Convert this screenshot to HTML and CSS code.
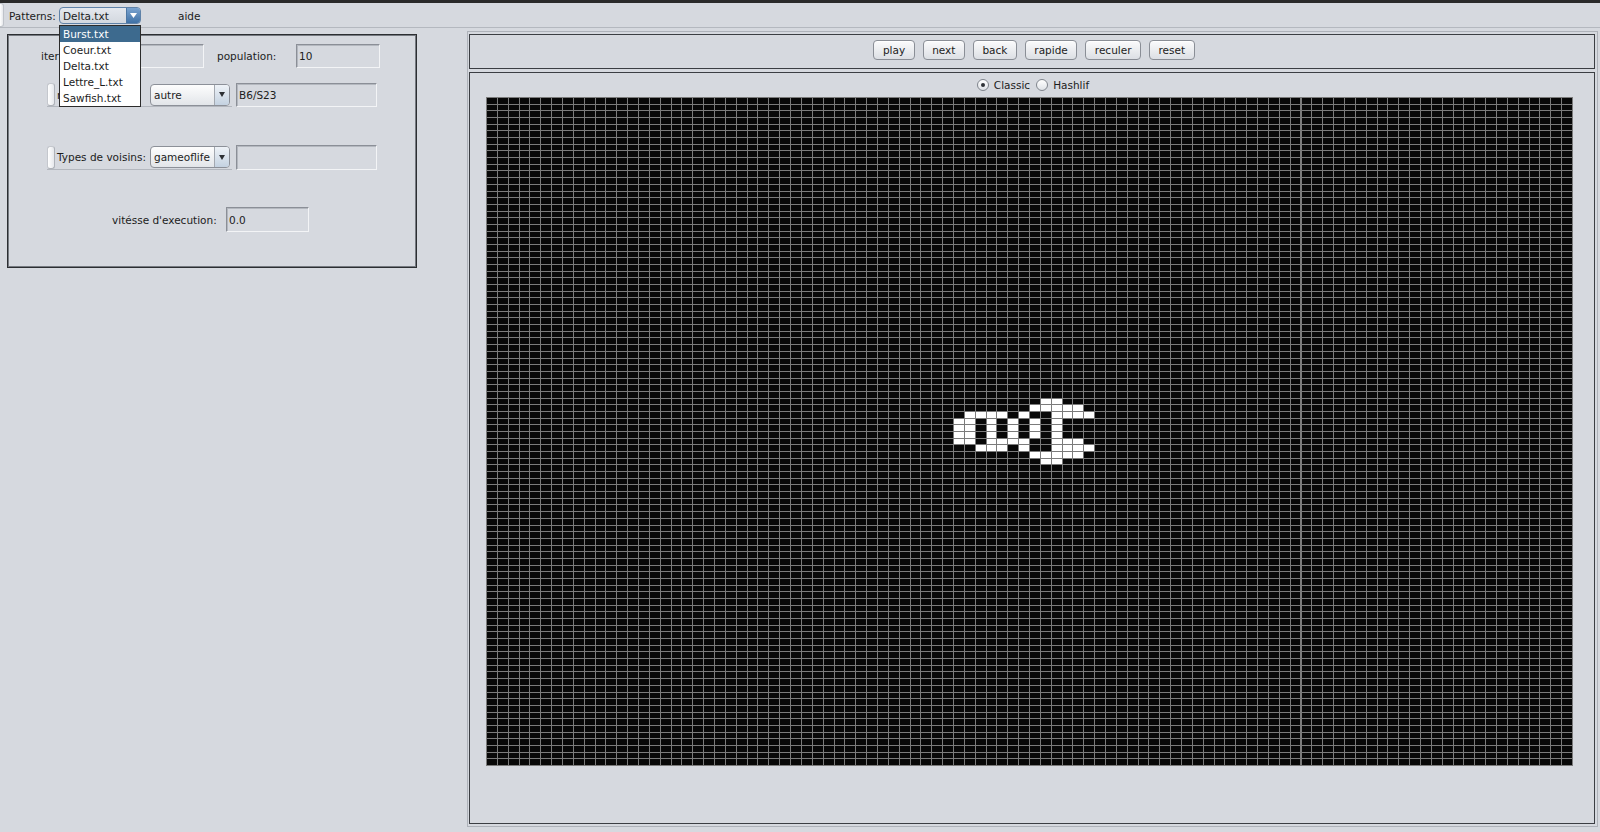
FILE: index.html
```html
<!DOCTYPE html>
<html lang="fr">
<head>
<meta charset="utf-8">
<title>Jeu de la vie</title>
<link rel="stylesheet" href="styles.css">
</head>
<body>
<div class="topstrip"></div>
<div class="menubar">
  <div class="grip grip-menu"></div>
  <span class="menu-label">Patterns:</span>
  <div class="combo combo-focus">
    <span class="combo-text">Delta.txt</span>
    <span class="combo-arrow"><svg width="7" height="5" viewBox="0 0 7 5"><path d="M0 0H7L3.5 5Z" fill="#fff"/></svg></span>
    <ul class="popup">
      <li class="sel">Burst.txt</li>
      <li>Coeur.txt</li>
      <li>Delta.txt</li>
      <li>Lettre_L.txt</li>
      <li>Sawfish.txt</li>
    </ul>
  </div>
  <span class="menu-item">aide</span>
</div>
<div class="main">
  <div class="leftcol">
    <div class="params">
      <div class="row r1">
        <span class="lbl l-iter">iterations:</span>
        <div class="field f-iter"></div>
        <span class="lbl l-pop">population:</span>
        <div class="field f-pop">10</div>
      </div>
      <div class="row r2">
        <div class="tb">
          <div class="grip grip-tb"></div>
          <span class="lbl tb-lbl">règles:</span>
          <div class="combo combo-plain">
            <span class="combo-text">autre</span>
            <span class="combo-arrow"><svg width="6" height="5" viewBox="0 0 6 5"><path d="M0 0H6L3 5Z" fill="#2d3035"/></svg></span>
          </div>
        </div>
        <div class="field f-wide">B6/S23</div>
      </div>
      <div class="row r3">
        <div class="tb">
          <div class="grip grip-tb"></div>
          <span class="lbl tb-lbl">Types de voisins:</span>
          <div class="combo combo-plain">
            <span class="combo-text">gameoflife</span>
            <span class="combo-arrow"><svg width="6" height="5" viewBox="0 0 6 5"><path d="M0 0H6L3 5Z" fill="#2d3035"/></svg></span>
          </div>
        </div>
        <div class="field f-wide"></div>
      </div>
      <div class="row r4">
        <span class="lbl l-speed">vitésse d'execution:</span>
        <div class="field f-speed">0.0</div>
      </div>
    </div>
  </div>
  <div class="rightcol">
    <div class="toolbar-panel">
      <button class="btn">play</button>
      <button class="btn">next</button>
      <button class="btn">back</button>
      <button class="btn">rapide</button>
      <button class="btn">reculer</button>
      <button class="btn">reset</button>
    </div>
    <div class="canvas-panel">
      <div class="radio-row">
        <span class="radio checked"></span><span class="radio-lbl">Classic</span>
        <span class="radio"></span><span class="radio-lbl">Hashlif</span>
      </div>
      <div class="grid-wrap">
        <div class="grid">
          <svg class="cells" width="1086" height="668" viewBox="0 0 100 100" preserveAspectRatio="none" shape-rendering="crispEdges">
            <defs><rect id="c" width="0.908" height="0.85" fill="#ffffff"/></defs>
            <g transform="translate(0.092 0.15)">
              <use href="#c" x="51" y="45"/><use href="#c" x="52" y="45"/>
              <use href="#c" x="50" y="46"/><use href="#c" x="51" y="46"/><use href="#c" x="52" y="46"/><use href="#c" x="53" y="46"/><use href="#c" x="54" y="46"/>
              <use href="#c" x="44" y="47"/><use href="#c" x="45" y="47"/><use href="#c" x="46" y="47"/><use href="#c" x="47" y="47"/><use href="#c" x="49" y="47"/><use href="#c" x="52" y="47"/><use href="#c" x="53" y="47"/><use href="#c" x="54" y="47"/><use href="#c" x="55" y="47"/>
              <use href="#c" x="43" y="48"/><use href="#c" x="44" y="48"/><use href="#c" x="46" y="48"/><use href="#c" x="48" y="48"/><use href="#c" x="50" y="48"/><use href="#c" x="52" y="48"/>
              <use href="#c" x="43" y="49"/><use href="#c" x="44" y="49"/><use href="#c" x="46" y="49"/><use href="#c" x="48" y="49"/><use href="#c" x="50" y="49"/><use href="#c" x="52" y="49"/>
              <use href="#c" x="43" y="50"/><use href="#c" x="44" y="50"/><use href="#c" x="46" y="50"/><use href="#c" x="48" y="50"/><use href="#c" x="50" y="50"/><use href="#c" x="52" y="50"/>
              <use href="#c" x="43" y="51"/><use href="#c" x="44" y="51"/><use href="#c" x="46" y="51"/><use href="#c" x="47" y="51"/><use href="#c" x="48" y="51"/><use href="#c" x="49" y="51"/><use href="#c" x="52" y="51"/><use href="#c" x="53" y="51"/><use href="#c" x="54" y="51"/>
              <use href="#c" x="45" y="52"/><use href="#c" x="46" y="52"/><use href="#c" x="47" y="52"/><use href="#c" x="49" y="52"/><use href="#c" x="52" y="52"/><use href="#c" x="53" y="52"/><use href="#c" x="54" y="52"/><use href="#c" x="55" y="52"/>
              <use href="#c" x="50" y="53"/><use href="#c" x="51" y="53"/><use href="#c" x="52" y="53"/><use href="#c" x="53" y="53"/><use href="#c" x="54" y="53"/>
              <use href="#c" x="51" y="54"/><use href="#c" x="52" y="54"/>
            </g>
          </svg>
        </div>
      </div>
    </div>
  </div>
</div>
</body>
</html>
```
FILE: styles.css
```css
* { box-sizing: border-box; }
html, body { margin: 0; padding: 0; }
body {
  width: 1600px;
  height: 832px;
  overflow: hidden;
  background: #d6d9df;
  font-family: "DejaVu Sans", "Liberation Sans", sans-serif;
  font-size: 10.5px;
  color: #1c1c1c;
}

.topstrip { height: 3px; background: #2a2a2a; }

/* ---------- menu bar ---------- */
.menubar {
  position: relative;
  z-index: 10;
  display: flex;
  align-items: center;
  height: 25px;
  padding-top: 1px;
  border-bottom: 1px solid #b4b8bf;
}
.grip {
  background: linear-gradient(to right, #ffffff, #e6e8ec);
  border: 1px solid #bfc3ca;
}
.grip-menu {
  align-self: stretch;
  width: 4px;
  margin-top: -1px;
  border-left: none;
  border-radius: 0 3px 3px 0;
}
.menu-label { margin-left: 5px; width: 50px; }
.menu-item { margin-left: 37px; }

/* ---------- combos ---------- */
.combo {
  position: relative;
  display: flex;
  align-items: stretch;
  border-radius: 4px;
  flex: none;
}
.combo-text {
  flex: 1;
  display: flex;
  align-items: center;
  padding-left: 3px;
  white-space: nowrap;
}
.combo-arrow {
  display: flex;
  align-items: center;
  justify-content: center;
  border-radius: 0 3px 3px 0;
}
.combo-focus {
  width: 82px;
  height: 17px;
  border: 1px solid #5f82a8;
  background: linear-gradient(#e4e8ee, #d3d8df);
}
.combo-focus .combo-arrow {
  width: 14px;
  background: linear-gradient(#7aa3cf, #3f71a6);
  border-left: 1px solid #4d77a3;
}
.combo-plain {
  width: 80px;
  height: 22px;
  border: 1px solid #8c9098;
  background: linear-gradient(#fdfdfd, #e2e5e9);
}
.combo-plain .combo-text { padding-left: 3px; }
.combo-plain .combo-arrow {
  width: 15px;
  border-left: 1px solid #a3a8b0;
  background: linear-gradient(#eef2f7, #c4d2e1);
}

.popup {
  position: absolute;
  top: 17px;
  left: -1px;
  width: 82px;
  margin: 0;
  padding: 0;
  list-style: none;
  background: #ffffff;
  border: 1px solid #2b2b2b;
}
.popup li {
  height: 16px;
  line-height: 16px;
  padding-left: 3px;
  white-space: nowrap;
}
.popup li.sel { background: #3d6a8e; color: #ffffff; }

/* ---------- main ---------- */
.main { display: flex; height: 804px; }

.leftcol {
  width: 467px;
  flex: none;
  padding: 6px 0 0 7px;
}
.params {
  width: 410px;
  height: 234px;
  border: 1px solid #2c2e32;
  box-shadow: inset 0 0 0 1px #767a81;
  padding: 1px;
  display: flex;
  flex-direction: column;
}
.row { display: flex; align-items: center; flex: none; }
.lbl { white-space: nowrap; flex: none; }
.field {
  flex: none;
  height: 24px;
  display: flex;
  align-items: center;
  padding-left: 2px;
  background: #d6d9df;
  border: 1px solid;
  border-color: #8b8f97 #f3f4f6 #f3f4f6 #8b8f97;
  box-shadow: inset 1px 1px 0 #b4b8bf;
}

.r1 { margin-top: 8px; height: 24px; padding-left: 32px; }
.l-iter { width: 76px; }
.f-iter { width: 87px; }
.l-pop { width: 79px; margin-left: 13px; }
.f-pop { width: 84px; }

.r2, .r3 { padding-left: 38px; }
.r2 { margin-top: 15px; height: 24px; }
.r3 { margin-top: 38px; height: 25px; }
.tb {
  display: flex;
  align-items: center;
  width: 185px;
  height: 24px;
  border-bottom: 1px solid #b3b7be;
}
.grip-tb {
  width: 8px;
  align-self: stretch;
  border-radius: 3px;
  border-color: #c4c7cd #aeb2b9 #aeb2b9 #c4c7cd;
}
.tb-lbl { width: 95px; padding-left: 2px; }
.f-wide { width: 141px; margin-left: 4px; }
.r3 .f-wide { height: 25px; }

.r4 { margin-top: 37px; height: 25px; padding-left: 103px; }
.l-speed { width: 114px; }
.f-speed { width: 83px; height: 25px; }

/* ---------- right column ---------- */
.rightcol {
  width: 1131px;
  flex: none;
  margin-top: 3px;
  height: 796px;
  border: 1px solid #aeb2b9;
  padding: 2px 2px 2px 1px;
  display: flex;
  flex-direction: column;
  gap: 3px;
}
.toolbar-panel {
  height: 35px;
  flex: none;
  border: 1px solid #3b3e43;
  display: flex;
  justify-content: center;
  align-items: center;
  gap: 8px;
  padding-left: 4px;
  padding-bottom: 3px;
}
.btn {
  height: 20px;
  padding: 0 8.5px;
  font-family: "DejaVu Sans", "Liberation Sans", sans-serif;
  font-size: 10.5px;
  color: #1c1c1c;
  border: 1px solid #8a8e96;
  border-radius: 4px;
  background: linear-gradient(#fbfbfc, #dcdfe4);
  box-shadow: inset 0 1px 0 #ffffff;
}

.canvas-panel {
  height: 752px;
  flex: none;
  border: 1px solid #3b3e43;
  display: flex;
  flex-direction: column;
}
.radio-row {
  height: 24px;
  flex: none;
  display: flex;
  align-items: center;
  justify-content: center;
  padding-left: 8px;
}
.radio {
  width: 12px;
  height: 12px;
  border-radius: 50%;
  border: 1px solid #80858d;
  background: linear-gradient(#ffffff, #dfe2e7);
  display: flex;
  align-items: center;
  justify-content: center;
  flex: none;
}
.radio.checked::after {
  content: "";
  width: 4px;
  height: 4px;
  border-radius: 50%;
  background: #2f3237;
}
.radio-lbl { margin-left: 5px; margin-right: 6px; }

.grid-wrap { padding-left: 16px; }
.grid {
  position: relative;
  width: 1087px;
  height: 669px;
  background-color: #080808;
  background-image:
    repeating-linear-gradient(to right, #7b7b7b 0, #7b7b7b 1px, transparent 1px, transparent 10.86px),
    repeating-linear-gradient(to bottom, #7b7b7b 0, #7b7b7b 1px, transparent 1px, transparent 6.68px);
}
.cells { position: absolute; left: 0; top: 0; display: block; }
```
